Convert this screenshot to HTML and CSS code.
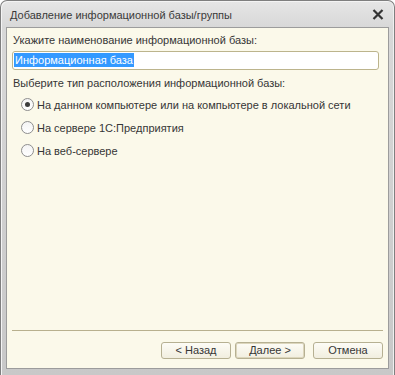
FILE: index.html
```html
<!DOCTYPE html>
<html lang="ru">
<head>
    <meta charset="UTF-8">
    <title>Добавление информационной базы/группы</title>
    <link rel="stylesheet" href="styles.css">
</head>
<body>
    <div class="window">
        <div class="titlebar">
            <span class="title">Добавление информационной базы/группы</span>
            <svg class="close" width="12" height="11" viewBox="0 0 12 11">
                <path d="M1.5 1 L10.5 10 M10.5 1 L1.5 10" stroke="#333" stroke-width="2.2" fill="none"/>
            </svg>
        </div>
        <div class="content">
            <div class="label">Укажите наименование информационной базы:</div>
            <div class="input"><span class="selected">Информационная база</span></div>

            <div class="label type-label">Выберите тип расположения информационной базы:</div>
            <div class="radios">
                <div class="radio-row"><span class="radio checked"></span>На данном компьютере или на компьютере в локальной сети</div>
                <div class="radio-row"><span class="radio"></span>На сервере 1С:Предприятия</div>
                <div class="radio-row"><span class="radio"></span>На веб-сервере</div>
            </div>

            <div class="spacer"></div>
            <div class="separator"></div>

            <div class="buttons">
                <button class="btn">&lt; Назад</button>
                <button class="btn default">Далее &gt;</button>
                <button class="btn">Отмена</button>
            </div>
        </div>
    </div>
</body>
</html>
```

FILE: styles.css
```css
html, body {
    margin: 0;
    padding: 0;
    background: #ffffff;
}
body {
    font-family: 'Liberation Sans', Arial, sans-serif;
    font-size: 11px;
    color: #363636;
}
.window {
    width: 395px;
    height: 375px;
    box-sizing: border-box;
    border: 1px solid #7f7f7f;
    border-bottom: none;
    border-radius: 7px 7px 0 0;
    background: linear-gradient(to bottom, #e6e6e6 0px, #d8d8d8 26px, #c8c8c8 100%);
    box-shadow: inset 1px 1px 0 #f4f4f4, inset -1px 0 0 #f0f0f0;
    padding: 0 5px 6px 5px;
    display: flex;
    flex-direction: column;
}
.titlebar {
    height: 26px;
    display: flex;
    align-items: center;
    justify-content: space-between;
    padding: 0 5px 0 4px;
}
.title {
    font-size: 11px;
    color: #3a3a3a;
    padding-top: 1px;
}
.close {
    margin-top: 1px;
}
.content {
    flex: 1;
    background: #fbf9ea;
    border: 1px solid #9c9c9c;
    padding: 5px 5px 0 5px;
    display: flex;
    flex-direction: column;
}
.label {
    line-height: 15px;
    padding-left: 1px;
}
.type-label {
    margin-top: 6px;
}
.input {
    margin-top: 3px;
    height: 16px;
    border: 1px solid #bcb48c;
    border-radius: 3px;
    background: #ffffff;
    margin-right: 4px;
    padding: 1px 0 0 1px;
}
.selected {
    background: #3399ff;
    color: #ffffff;
    line-height: 14px;
    display: inline-block;
    padding: 0 1px;
}
.radios {
    margin-top: 6px;
    padding-left: 9px;
    display: flex;
    flex-direction: column;
    gap: 8px;
}
.radio-row {
    display: flex;
    align-items: center;
    height: 15px;
}
.radio {
    width: 11px;
    height: 11px;
    border: 1px solid #8e8e8e;
    border-radius: 50%;
    background: linear-gradient(to bottom, #f4f4f4, #ffffff);
    margin-right: 3px;
    display: inline-flex;
    align-items: center;
    justify-content: center;
}
.radio.checked::after {
    content: "";
    width: 5px;
    height: 5px;
    border-radius: 50%;
    background: #3c3c3c;
}
.spacer {
    flex: 1;
}
.separator {
    border-top: 1px solid #b8b08e;
}
.buttons {
    display: flex;
    justify-content: flex-end;
    gap: 4px;
    padding: 11px 0 9px 0;
}
.btn {
    font-family: 'Liberation Sans', Arial, sans-serif;
    font-size: 11px;
    color: #363636;
    width: 70px;
    height: 17px;
    padding: 0;
    border: 1px solid #b6b092;
    border-radius: 3px;
    background: linear-gradient(to bottom, #fdfcf6, #f1eedf);
    line-height: 15px;
}
.btn.default {
    box-shadow: inset 0 0 0 1px #dcd6bc;
    margin-right: 4px;
}
```
